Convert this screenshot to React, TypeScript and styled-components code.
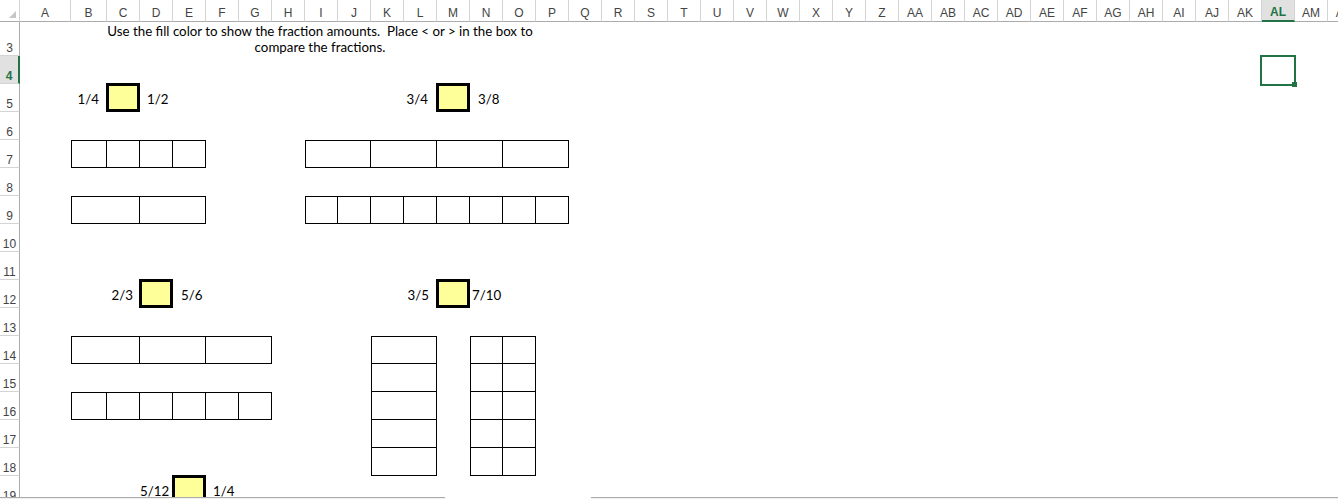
import styled, { createGlobalStyle } from "styled-components";

const GlobalStyle = createGlobalStyle`
  html, body {
    margin: 0;
    padding: 0;
    background: #fff;
    overflow: hidden;
  }
`;

// column letters A..AN, grid column 1 is the row header
const letters = Array.from({ length: 40 }, (_, i) =>
  i < 26 ? String.fromCharCode(65 + i) : "A" + String.fromCharCode(39 + i)
);
const col = (l: string) => letters.indexOf(l) + 2;
const row = (r: number) => r - 1;
const rowNumbers = Array.from({ length: 17 }, (_, i) => i + 3);

type BarDef = { c: string; r: number; cols: number; rows?: number; parts: number[] };

const bars: BarDef[] = [
  { c: "B", r: 7, cols: 4, parts: [1, 1, 1, 1] },
  { c: "I", r: 7, cols: 8, parts: [2, 2, 2, 2] },
  { c: "B", r: 9, cols: 4, parts: [2, 2] },
  { c: "I", r: 9, cols: 8, parts: [1, 1, 1, 1, 1, 1, 1, 1] },
  { c: "B", r: 14, cols: 6, parts: [2, 2, 2] },
  { c: "B", r: 16, cols: 6, parts: [1, 1, 1, 1, 1, 1] },
  { c: "K", r: 14, cols: 2, rows: 5, parts: [2, 2, 2, 2, 2] },
  { c: "N", r: 14, cols: 2, rows: 5, parts: [1, 1, 1, 1, 1, 1, 1, 1, 1, 1] },
];

type Compare = { r: number; left: string; leftCol: string; leftPad: number; box: string; right: string; rightCol: string; rightPad: number };

const compares: Compare[] = [
  { r: 5, left: "1/4", leftCol: "B", leftPad: 8, box: "C", right: "1/2", rightCol: "D", rightPad: 7 },
  { r: 5, left: "3/4", leftCol: "L", leftPad: 9, box: "M", right: "3/8", rightCol: "N", rightPad: 8 },
  { r: 12, left: "2/3", leftCol: "C", leftPad: 7, box: "D", right: "5/6", rightCol: "E", rightPad: 8 },
  { r: 12, left: "3/5", leftCol: "L", leftPad: 8, box: "M", right: "7/10", rightCol: "N", rightPad: 2 },
  { r: 19, left: "5/12", leftCol: "D", leftPad: 4, box: "E", right: "1/4", rightCol: "F", rightPad: 7 },
];

export default function App() {
  return (
    <>
      <GlobalStyle />
      <Window>
        <Sheet>
          <Corner />
          {letters.map((l) => (
            <ColHeader key={l} $active={l === "AL"}>
              {l}
            </ColHeader>
          ))}
          {rowNumbers.map((n) => (
            <RowHeader key={n} $row={row(n)} $active={n === 4}>
              {n}
            </RowHeader>
          ))}

          <Title $col={col("B")} $row={row(3)} $span={15}>
            {"Use the fill color to show the fraction amounts.  Place < or > in the box to"}
            <br />
            compare the fractions.
          </Title>

          {compares.map((c, i) => (
            <CompareRow key={i} c={c} />
          ))}

          {bars.map((b, i) => (
            <Bar key={i} $col={col(b.c)} $row={row(b.r)} $cols={b.cols} $rows={b.rows ?? 1}>
              {b.parts.map((p, j) => (
                <Part key={j} $span={p} />
              ))}
            </Bar>
          ))}

          <Selection $col={col("AL")} $row={row(4)} />
        </Sheet>
        <Footer>
          <FooterLine $w="445px" />
          <FooterGap />
          <FooterLine $w="auto" />
        </Footer>
      </Window>
    </>
  );
}

const CompareRow = ({ c }: { c: Compare }) => (
  <>
    <Label $col={col(c.leftCol)} $row={row(c.r)} $align="right" $pad={c.leftPad}>
      {c.left}
    </Label>
    <AnswerBox $col={col(c.box)} $row={row(c.r)} />
    <Label $col={col(c.rightCol)} $row={row(c.r)} $align="left" $pad={c.rightPad}>
      {c.right}
    </Label>
  </>
);

const Window = styled.div`
  width: 1338px;
  height: 499px;
  display: flex;
  flex-direction: column;
  overflow: hidden;
  background: #fff;
`;

const Sheet = styled.div`
  flex: 1;
  min-height: 0;
  overflow: hidden;
  display: grid;
  grid-template-columns: 20px 51px 36px repeat(38, 33px);
  grid-template-rows: 22px 34px repeat(17, 28px);
  font-family: Lato, "Liberation Sans", sans-serif;
  font-size: 13.3px;
  color: #000;
`;

const Corner = styled.div`
  grid-column: 1;
  grid-row: 1;
  border-bottom: 1px solid #ababab;
  border-right: 1px solid #d4d4d4;
  display: flex;
  align-items: flex-end;
  justify-content: flex-end;
  padding: 0 3px 3px 0;
  &::before {
    content: "";
    width: 0;
    height: 0;
    border-left: 7px solid transparent;
    border-bottom: 7px solid #c6c6c6;
  }
`;

const ColHeader = styled.div<{ $active: boolean }>`
  grid-row: 1;
  display: flex;
  align-items: flex-end;
  justify-content: center;
  padding-bottom: 1px;
  font-family: "Liberation Sans", Arial, sans-serif;
  font-size: 12px;
  line-height: 14px;
  color: ${(p) => (p.$active ? "#217346" : "#444")};
  font-weight: ${(p) => (p.$active ? 700 : 400)};
  background: ${(p) => (p.$active ? "#e1e1e1" : "#fff")};
  border-right: 1px solid #d4d4d4;
  border-bottom: ${(p) => (p.$active ? "2px solid #217346" : "1px solid #ababab")};
  white-space: nowrap;
`;

const RowHeader = styled.div<{ $row: number; $active: boolean }>`
  grid-column: 1;
  grid-row: ${(p) => p.$row};
  display: flex;
  align-items: flex-end;
  justify-content: center;
  font-family: "Liberation Sans", Arial, sans-serif;
  font-size: 12px;
  line-height: 14px;
  color: ${(p) => (p.$active ? "#217346" : "#444")};
  font-weight: ${(p) => (p.$active ? 700 : 400)};
  background: ${(p) => (p.$active ? "#e1e1e1" : "#fff")};
  border-bottom: 1px solid #d4d4d4;
  border-right: ${(p) => (p.$active ? "2px solid #217346" : "1px solid #ababab")};
  box-sizing: border-box;
`;

const Title = styled.div<{ $col: number; $row: number; $span: number }>`
  grid-column: ${(p) => p.$col} / span ${(p) => p.$span};
  grid-row: ${(p) => p.$row};
  align-self: end;
  text-align: center;
  line-height: 16px;
  padding-bottom: 1px;
  white-space: pre-wrap;
`;

const Label = styled.div<{ $col: number; $row: number; $align: "left" | "right"; $pad: number }>`
  grid-column: ${(p) => p.$col};
  grid-row: ${(p) => p.$row};
  align-self: end;
  text-align: ${(p) => p.$align};
  padding-${(p) => p.$align}: ${(p) => p.$pad}px;
  padding-bottom: 4px;
  line-height: 17px;
  white-space: nowrap;
`;

const AnswerBox = styled.div<{ $col: number; $row: number }>`
  grid-column: ${(p) => p.$col};
  grid-row: ${(p) => p.$row};
  margin: -1px 0 0 -1px;
  border: 3px solid #000;
  background: #ffff99;
`;

const Bar = styled.div<{ $col: number; $row: number; $cols: number; $rows: number }>`
  grid-column: ${(p) => p.$col} / span ${(p) => p.$cols};
  grid-row: ${(p) => p.$row} / span ${(p) => p.$rows};
  display: grid;
  grid-template-columns: subgrid;
  grid-template-rows: subgrid;
  border-top: 1px solid #000;
  border-left: 1px solid #000;
`;

const Part = styled.div<{ $span: number }>`
  grid-column: span ${(p) => p.$span};
  border-right: 1px solid #000;
  border-bottom: 1px solid #000;
`;

const Selection = styled.div<{ $col: number; $row: number }>`
  grid-column: ${(p) => p.$col};
  grid-row: ${(p) => p.$row};
  margin: -1px -1px -2px -2px;
  border: 2px solid #217346;
  position: relative;
  &::after {
    content: "";
    position: absolute;
    right: -3px;
    bottom: -3px;
    width: 5px;
    height: 5px;
    background: #217346;
  }
`;

const Footer = styled.div`
  height: 2px;
  display: flex;
  flex-shrink: 0;
`;

const FooterLine = styled.div<{ $w: string }>`
  width: ${(p) => p.$w};
  flex: ${(p) => (p.$w === "auto" ? 1 : "none")};
  border-top: 1px solid #ababab;
  background: #f0f0f0;
`;

const FooterGap = styled.div`
  width: 146px;
  background: #fff;
`;
